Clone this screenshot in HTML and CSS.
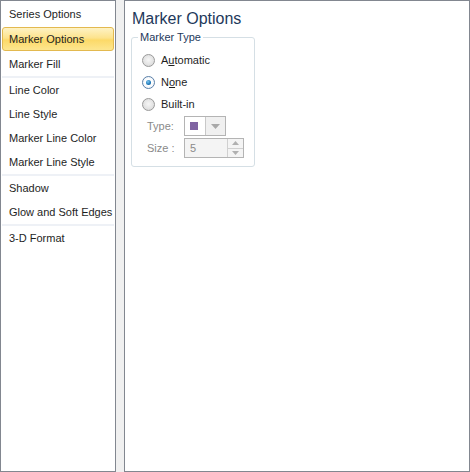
FILE: index.html
```html
<!DOCTYPE html>
<html>
<head>
<meta charset="utf-8">
<link rel="stylesheet" href="styles.css">
</head>
<body>
<div class="dialog">
  <div class="nav">
    <div class="item">Series Options</div>
    <div class="item selected">Marker Options</div>
    <div class="item">Marker Fill</div>
    <div class="sep"></div>
    <div class="item">Line Color</div>
    <div class="item">Line Style</div>
    <div class="item">Marker Line Color</div>
    <div class="item">Marker Line Style</div>
    <div class="sep"></div>
    <div class="item">Shadow</div>
    <div class="item">Glow and Soft Edges</div>
    <div class="sep"></div>
    <div class="item">3-D Format</div>
  </div>
  <div class="content">
    <div class="title">Marker Options</div>
    <fieldset class="group">
      <legend>Marker Type</legend>
      <div class="radio-row"><span class="radio"></span><span>A<u>u</u>tomatic</span></div>
      <div class="radio-row"><span class="radio checked"><span class="dot"></span></span><span>N<u>o</u>ne</span></div>
      <div class="radio-row"><span class="radio"></span><span>Built-in</span></div>
      <div class="field-row">
        <span class="flabel">Type:</span>
        <div class="combo">
          <div class="swatch-cell"><span class="swatch"></span></div>
          <div class="combo-btn"><svg width="9" height="5" viewBox="0 0 9 5"><path d="M0 0h9L4.5 5z" fill="#a8a8a8"/></svg></div>
        </div>
      </div>
      <div class="field-row">
        <span class="flabel">Size :</span>
        <div class="spin">
          <span class="spin-val">5</span>
          <div class="spin-btns">
            <div class="sbtn"><svg width="7" height="4" viewBox="0 0 7 4"><path d="M0 4h7L3.5 0z" fill="#b0b0b0"/></svg></div>
            <div class="sbtn"><svg width="7" height="4" viewBox="0 0 7 4"><path d="M0 0h7L3.5 4z" fill="#b0b0b0"/></svg></div>
          </div>
        </div>
      </div>
    </fieldset>
  </div>
</div>
</body>
</html>
```
FILE: styles.css
```css
html, body {
  margin: 0;
  padding: 0;
  background: #f0f0f0;
}
body {
  font-family: "Liberation Sans", Arial, sans-serif;
  font-size: 11px;
  color: #1e1e1e;
}
.dialog {
  display: flex;
  gap: 8px;
  width: 470px;
  height: 472px;
}
.nav {
  width: 114px;
  height: 469px;
  border: 1px solid #828790;
  background: #fff;
  padding: 1px 0 0 0;
  display: flex;
  flex-direction: column;
}
.item {
  height: 24px;
  line-height: 24px;
  padding-left: 7px;
  margin: 0 1px;
  white-space: nowrap;
  color: #1e1e1e;
}
.item.selected {
  height: 22px;
  line-height: 22px;
  margin: 1px;
  padding-left: 6px;
  border: 1px solid #e3b94f;
  border-radius: 3px;
  background: linear-gradient(#fef2c4 0%, #fde38d 45%, #fcd968 55%, #fde68f 100%);
}
.sep {
  height: 2px;
  margin: 0 1px;
  background: #eef1f6;
}
.content {
  flex: 1;
  border: 1px solid #828790;
  background: #fff;
  padding: 8px 0 0 6px;
}
.title {
  font-size: 16px;
  color: #1e395b;
  line-height: 19px;
  padding-left: 1px;
  margin-bottom: 3px;
}
.group {
  margin: 0;
  width: 124px;
  height: 136px;
  box-sizing: border-box;
  border: 1px solid #d5dfe5;
  border-radius: 3px;
  padding: 6px 0 0 10px;
}
.group legend {
  color: #1e395b;
  padding: 0 2px;
  margin-left: -4px;
  line-height: 12px;
}
.radio-row {
  display: flex;
  align-items: center;
  gap: 6px;
  height: 22px;
  color: #1e1e1e;
}
.radio {
  width: 11px;
  height: 11px;
  border: 1px solid #9a9a9a;
  border-radius: 50%;
  background: radial-gradient(circle at 50% 45%, #f6f6f6 0%, #e2e2e2 60%, #cfcfcf 100%);
  display: flex;
  align-items: center;
  justify-content: center;
}
.radio.checked {
  border-color: #5a7fa8;
  background: radial-gradient(circle, #fff 40%, #e4ecf4 100%);
}
.dot {
  width: 5px;
  height: 5px;
  border-radius: 50%;
  background: radial-gradient(circle at 40% 35%, #7fc6ef 0%, #1b77b8 60%, #0d4e87 100%);
}
.field-row {
  display: flex;
  align-items: center;
  height: 22px;
  padding-left: 5px;
}
.flabel {
  width: 37px;
  color: #8a8a8a;
}
.combo {
  display: flex;
  height: 18px;
  border: 1px solid #b4b4b4;
  background: #f4f4f4;
}
.swatch-cell {
  width: 20px;
  display: flex;
  align-items: center;
  justify-content: center;
  background: #fff;
}
.swatch {
  width: 8px;
  height: 8px;
  background: #8064a2;
  margin-left: -2px;
}
.combo-btn {
  width: 19px;
  border-left: 1px solid #c8c8c8;
  display: flex;
  align-items: center;
  justify-content: center;
  background: #f0f0f0;
}
.spin {
  display: flex;
  width: 58px;
  height: 18px;
  border: 1px solid #b4b4b4;
  background: #f4f4f4;
}
.spin-val {
  flex: 1;
  padding-left: 5px;
  line-height: 18px;
  color: #8a8a8a;
}
.spin-btns {
  width: 15px;
  display: flex;
  flex-direction: column;
  border-left: 1px solid #d0d0d0;
}
.sbtn {
  flex: 1;
  display: flex;
  align-items: center;
  justify-content: center;
}
.sbtn + .sbtn {
  border-top: 1px solid #d0d0d0;
}
```
